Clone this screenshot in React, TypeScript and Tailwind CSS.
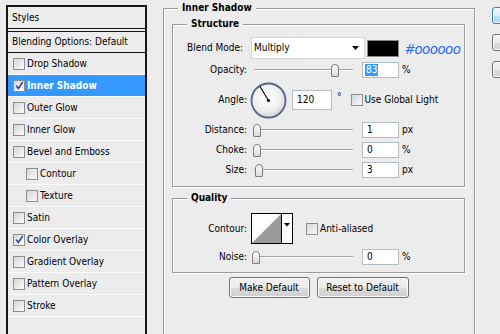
import React from "react";

const FONT = "font-['DejaVu_Sans_Condensed','DejaVu_Sans','Liberation_Sans',sans-serif]";

function Box({ checked }: { checked?: boolean }) {
  return (
    <span className="w-[12px] h-[12px] shrink-0 border border-[#8e8e8e] bg-linear-to-br from-[#d6d6d6] to-[#fbfbfb] flex items-center justify-center">
      {checked && (
        <svg width="9" height="9" viewBox="0 0 9 9">
          <path d="M1.2 4.6 L3.4 7.4 L7.8 0.8" stroke="#2b3c93" strokeWidth="1.5" fill="none" />
        </svg>
      )}
    </span>
  );
}

type Row = { label: string; checked?: boolean; selected?: boolean; indent?: boolean };

const rows: Row[] = [
  { label: "Drop Shadow" },
  { label: "Inner Shadow", checked: true, selected: true },
  { label: "Outer Glow" },
  { label: "Inner Glow" },
  { label: "Bevel and Emboss" },
  { label: "Contour", indent: true },
  { label: "Texture", indent: true },
  { label: "Satin" },
  { label: "Color Overlay", checked: true },
  { label: "Gradient Overlay" },
  { label: "Pattern Overlay" },
  { label: "Stroke" },
];

function LeftPanel() {
  return (
    <div className="ml-[6px] mt-[5px] w-[141px] h-[340px] shrink-0 border-2 border-[#151515] flex flex-col">
      <div className="h-[21px] pl-[4px] flex items-center">Styles</div>
      <div className="h-[4px] border-y border-[#151515]" />
      <div className="h-[21px] pl-[4px] flex items-center border-b border-[#151515]">Blending Options: Default</div>
      {rows.map((r) => (
        <div
          key={r.label}
          className={
            "h-[22px] flex items-center border-b border-[#fafafa] " +
            (r.selected ? "bg-[#3399ff] text-white font-bold " : "") +
            (r.indent ? "pl-[18px]" : "pl-[5px]")
          }
        >
          <Box checked={r.checked} />
          <span className="ml-[2px]">{r.label}</span>
        </div>
      ))}
    </div>
  );
}

function Legend({ children }: { children: React.ReactNode }) {
  return (
    <div className="-mt-[8px] ml-[14px] px-[4px] w-fit h-[14px] leading-[14px] bg-[#ececec] font-bold">{children}</div>
  );
}

function Slider({ thumb }: { thumb: string }) {
  return (
    <div className="relative ml-[4px] w-[102px] h-[16px] shrink-0">
      <div className="absolute left-[3px] right-0 top-[7px] h-[2px] border-t border-[#a3a3a3] bg-white" />
      <div
        className={
          "absolute top-[2px] w-[8px] h-[13px] rounded-t-[4px] rounded-b-[1px] border border-[#7c7c7c] bg-linear-to-b from-white to-[#d9d9d9] " +
          thumb
        }
      />
    </div>
  );
}

function Field({ value, selected, w = "w-[37px]", h = "h-[16px]" }: { value: string; selected?: boolean; w?: string; h?: string }) {
  return (
    <div className={"shrink-0 bg-white border border-[#b4bcc6] flex items-center " + w + " " + h + (selected ? " pl-[2px]" : " pl-[4px]")}>
      {selected ? <span className="bg-[#3399ff] text-white px-[1px] leading-[12px]">{value}</span> : value}
    </div>
  );
}

function Label({ children, extra = "" }: { children: React.ReactNode; extra?: string }) {
  return <div className={"w-[74px] shrink-0 text-right " + extra}>{children}</div>;
}

function SliderRow({ label, thumb, value, unit, selected, mt }: { label: string; thumb: string; value: string; unit: string; selected?: boolean; mt: string }) {
  return (
    <div className={"flex items-center h-[16px] " + mt}>
      <Label>{label}</Label>
      <Slider thumb={thumb} />
      <div className="ml-[9px]">
        <Field value={value} selected={selected} />
      </div>
      <span className="ml-[3px]">{unit}</span>
    </div>
  );
}

function Dial() {
  return (
    <svg width="37" height="37" viewBox="0 0 37 37" className="ml-[3px] shrink-0">
      <defs>
        <radialGradient id="dg" cx="45%" cy="40%" r="60%">
          <stop offset="0%" stopColor="#ffffff" />
          <stop offset="70%" stopColor="#eeeeee" />
          <stop offset="100%" stopColor="#d2d2d2" />
        </radialGradient>
      </defs>
      <circle cx="18.5" cy="18.5" r="17" fill="url(#dg)" stroke="#56648a" strokeWidth="1.8" />
      <line x1="18.5" y1="18.5" x2="10" y2="4.5" stroke="#000" strokeWidth="1.1" />
      <circle cx="18.5" cy="18.5" r="1.6" fill="#000" />
    </svg>
  );
}

function ContourPicker() {
  return (
    <div className="ml-[4px] flex h-[31px] shrink-0 border border-black bg-white">
      <svg width="29" height="29" viewBox="0 0 29 29">
        <polygon points="0,29 29,0 29,29" fill="#9a9a9a" />
      </svg>
      <div className="w-[11px] border-l border-black flex justify-center pt-[9px]">
        <svg width="6" height="4" viewBox="0 0 6 4">
          <polygon points="0,0 6,0 3,3.5" fill="#000" />
        </svg>
      </div>
    </div>
  );
}

function VistaButton({ children, w }: { children: React.ReactNode; w: string }) {
  return (
    <div
      className={
        "h-[21px] rounded-[3px] border border-[#707070] flex items-center justify-center shadow-[inset_0_0_0_1px_#fbfbfb] bg-[linear-gradient(to_bottom,#f2f2f2_0%,#ebebeb_50%,#dddddd_51%,#cfcfcf_100%)] " +
        w
      }
    >
      {children}
    </div>
  );
}

function MainBox() {
  return (
    <div className="ml-[16px] mt-[8px] w-[312px] h-[340px] shrink-0 border border-[#9a9a9a] shadow-[inset_1px_1px_0_#fff,1px_1px_0_#fff]">
      <Legend>Inner Shadow</Legend>

      {/* Structure */}
      <div className="ml-[8px] mt-[9px] w-[293px] pb-[8px] border border-[#9a9a9a] shadow-[inset_1px_1px_0_#fff,1px_1px_0_#fff]">
        <Legend>Structure</Legend>

        <div className="mt-[6px] flex items-center h-[22px]">
          <Label extra="pr-[4px]">Blend Mode:</Label>
          <div className="ml-[4px] w-[114px] h-[22px] shrink-0 bg-white border border-[#d6d6d6] flex items-center justify-between pl-[2px] pr-[5px]">
            <span>Multiply</span>
            <svg width="7" height="4" viewBox="0 0 7 4">
              <polygon points="0,0 7,0 3.5,4" fill="#000" />
            </svg>
          </div>
          <div className="ml-[2px] w-[32px] h-[17px] shrink-0 border border-[#8a8a8a] bg-black" />
          <span className="ml-[6px] text-[15px] leading-[18px] italic text-[#2468ee] oldstyle-nums font-['Open_Sans',sans-serif] whitespace-nowrap">
            #000000
          </span>
        </div>

        <SliderRow label="Opacity:" thumb="left-[80px]" value="83" unit="%" selected mt="mt-[3px]" />

        <div className="mt-[4px] flex items-center h-[36px]">
          <Label>Angle:</Label>
          <Dial />
          <div className="ml-[5px]">
            <Field value="120" w="w-[40px]" h="h-[20px]" />
          </div>
          <span className="ml-[5px] self-start mt-[8px]">°</span>
          <div className="ml-[9px] flex items-center">
            <Box />
            <span className="ml-[2px]">Use Global Light</span>
          </div>
        </div>

        <SliderRow label="Distance:" thumb="left-[2px]" value="1" unit="px" mt="mt-[4px]" />
        <SliderRow label="Choke:" thumb="left-[2px]" value="0" unit="%" mt="mt-[4px]" />
        <SliderRow label="Size:" thumb="left-[4px]" value="3" unit="px" mt="mt-[4px]" />
      </div>

      {/* Quality */}
      <div className="ml-[8px] mt-[11px] w-[293px] pb-[7px] border border-[#9a9a9a] shadow-[inset_1px_1px_0_#fff,1px_1px_0_#fff]">
        <Legend>Quality</Legend>
        <div className="mt-[8px] flex items-center h-[31px]">
          <Label>Contour:</Label>
          <ContourPicker />
          <div className="ml-[13px] flex items-center">
            <Box />
            <span className="ml-[2px]">Anti-aliased</span>
          </div>
        </div>
        <SliderRow label="Noise:" thumb="left-[1px]" value="0" unit="%" mt="mt-[5px]" />
      </div>

      <div className="ml-[8px] mt-[4px] w-[293px] flex justify-center gap-[7px]">
        <VistaButton w="w-[81px]">Make Default</VistaButton>
        <VistaButton w="w-[92px]">Reset to Default</VistaButton>
      </div>
    </div>
  );
}

function SideButtons() {
  return (
    <div className="ml-[17px] mt-[7px] flex flex-col gap-[10px] shrink-0">
      <div className="w-[75px] h-[17px] rounded-[3px] border border-[#3c7fb1] shadow-[inset_0_0_0_1px_#eaf6fd] bg-[linear-gradient(to_bottom,#eaf6fd_0%,#d9f0fc_50%,#bee6fd_51%,#a7d9f5_100%)]" />
      <div className="w-[75px] h-[17px] rounded-[3px] border border-[#707070] shadow-[inset_0_0_0_1px_#fbfbfb] bg-[linear-gradient(to_bottom,#f2f2f2_0%,#ebebeb_50%,#dddddd_51%,#cfcfcf_100%)]" />
      <div className="w-[75px] h-[17px] rounded-[3px] border border-[#707070] shadow-[inset_0_0_0_1px_#fbfbfb] bg-[linear-gradient(to_bottom,#f2f2f2_0%,#ebebeb_50%,#dddddd_51%,#cfcfcf_100%)]" />
    </div>
  );
}

export default function App() {
  return (
    <div className={"w-[500px] h-[334px] overflow-hidden bg-[#ececec] flex items-start text-[10px] leading-[14px] text-black " + FONT}>
      <LeftPanel />
      <MainBox />
      <SideButtons />
    </div>
  );
}
